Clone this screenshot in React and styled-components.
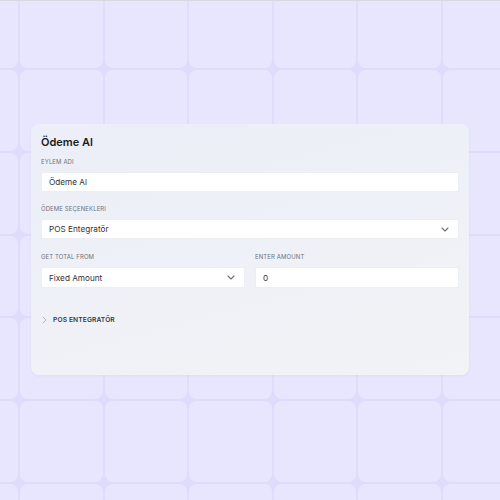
import React from 'react';
import styled, { createGlobalStyle } from 'styled-components';

const tileSvg = encodeURIComponent(
  `<svg xmlns='http://www.w3.org/2000/svg' width='84.6' height='82.8' viewBox='0 0 84.6 82.8'><rect width='84.6' height='82.8' fill='#dedcfc'/><rect x='0.9' y='0.9' width='82.8' height='81' rx='8' fill='#e8e6fe'/></svg>`
);

const GlobalStyle = createGlobalStyle`
  html, body {
    margin: 0;
    padding: 0;
    height: 100%;
  }
  body {
    font-family: Inter, "Noto Sans", Arial, sans-serif;
    background-color: #e8e6fe;
    background-image: url("data:image/svg+xml,${tileSvg}");
    background-size: 84.6px 82.8px;
    background-position: 19px -13.8px;
    border-top: 1px solid #d8d8e2;
    box-sizing: border-box;
  }
  * { box-sizing: border-box; }
`;

const Page = styled.div`
  padding: 123px 31px 0;
  min-height: 499px;
`;

const Card = styled.div`
  height: 251px;
  border-radius: 8px;
  background: linear-gradient(165deg, #eceef8 0%, #eff1f7 55%, #f2f3f6 100%);
  box-shadow: 0 1px 3px rgba(60, 60, 100, 0.05);
  padding: 10px 10px;
  display: flex;
  flex-direction: column;
`;

const Title = styled.h2`
  margin: 0 0 8px;
  font-size: 11px;
  line-height: 16px;
  font-weight: 600;
  color: #1a1c21;
`;

const Field = styled.div`
  display: flex;
  flex-direction: column;
  margin-top: ${p => (p.$first ? 0 : 13)}px;
`;

const Label = styled.label`
  font-size: 6px;
  line-height: 8px;
  font-weight: 400;
  letter-spacing: 0.1px;
  text-transform: uppercase;
  color: #6e727b;
  margin-bottom: 6px;
`;

const Box = styled.div`
  height: 20px;
  background: #ffffff;
  border: 1px solid #eceef3;
  border-radius: 2px;
  display: flex;
  align-items: center;
  justify-content: space-between;
  padding: 0 9px 0 7px;
  font-size: 8.2px;
  color: #2f333a;
`;

const Row = styled.div`
  display: grid;
  grid-template-columns: 1fr 1fr;
  column-gap: 10px;
  margin-top: 14px;
  & > ${Field} { margin-top: 0; }
  & ${Box} { height: 21px; }
`;

const Collapse = styled.div`
  margin-top: 26px;
  display: flex;
  align-items: center;
  gap: 6px;
  height: 12px;
  padding-left: 1px;
`;

const CollapseTitle = styled.span`
  font-size: 6.7px;
  font-weight: 600;
  letter-spacing: 0.1px;
  color: #343a46;
  text-transform: uppercase;
`;

const ChevronDown = () => (
  <svg width="8" height="5" viewBox="0 0 8 5" fill="none">
    <path d="M1 1l3 3 3-3" stroke="#6b7079" strokeWidth="1.1" strokeLinecap="round" strokeLinejoin="round" />
  </svg>
);

const ChevronRight = () => (
  <svg width="5" height="8" viewBox="0 0 5 8" fill="none">
    <path d="M1 1l3 3-3 3" stroke="#b4b8c2" strokeWidth="1" strokeLinecap="round" strokeLinejoin="round" />
  </svg>
);

export default function App() {
  return (
    <>
      <GlobalStyle />
      <Page>
        <Card>
          <Title>Ödeme Al</Title>
          <Field $first>
            <Label>Eylem Adı</Label>
            <Box>Ödeme Al</Box>
          </Field>
          <Field>
            <Label>Ödeme Seçenekleri</Label>
            <Box>
              POS Entegratör
              <ChevronDown />
            </Box>
          </Field>
          <Row>
            <Field>
              <Label>Get Total From</Label>
              <Box>
                Fixed Amount
                <ChevronDown />
              </Box>
            </Field>
            <Field>
              <Label>Enter Amount</Label>
              <Box>0</Box>
            </Field>
          </Row>
          <Collapse>
            <ChevronRight />
            <CollapseTitle>POS Entegratör</CollapseTitle>
          </Collapse>
        </Card>
      </Page>
    </>
  );
}
